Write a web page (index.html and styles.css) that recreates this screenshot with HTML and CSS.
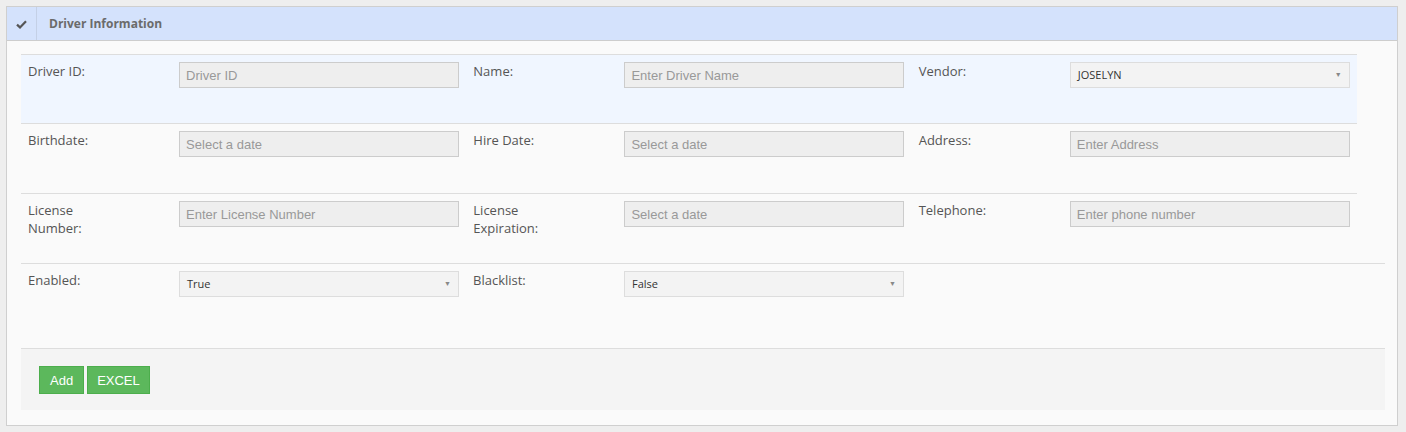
FILE: index.html
```html
<!DOCTYPE html>
<html>
<head>
<meta charset="utf-8">
<link rel="stylesheet" href="styles.css">
</head>
<body>
<div class="panel">
  <div class="panel-head">
    <div class="head-icon">
      <svg width="11" height="9" viewBox="0 0 11 9"><path d="M1 4.6 L4 7.4 L10 1.2" fill="none" stroke="#555" stroke-width="2.2"/></svg>
    </div>
    <div class="head-title">Driver Information</div>
  </div>
  <div class="panel-body">
    <table class="form-table">
      <colgroup><col class="c-l"><col class="c-i"><col class="c-l"><col class="c-i"><col class="c-l"><col class="c-i"></colgroup>
      <tr class="hl">
        <td class="lbl"><div class="lt">Driver ID:</div></td><td><input class="inp" placeholder="Driver ID"></td>
        <td class="lbl"><div class="lt">Name:</div></td><td><input class="inp" placeholder="Enter Driver Name"></td>
        <td class="lbl"><div class="lt">Vendor:</div></td><td><div class="sel">JOSELYN<span class="arr">▼</span></div></td>
      </tr>
      <tr>
        <td class="lbl"><div class="lt">Birthdate:</div></td><td><input class="inp" placeholder="Select a date"></td>
        <td class="lbl"><div class="lt">Hire Date:</div></td><td><input class="inp" placeholder="Select a date"></td>
        <td class="lbl"><div class="lt">Address:</div></td><td><input class="inp" placeholder="Enter Address"></td>
      </tr>
      <tr class="last">
        <td class="lbl"><div class="lt">License Number:</div></td><td><input class="inp" placeholder="Enter License Number"></td>
        <td class="lbl"><div class="lt">License Expiration:</div></td><td><input class="inp" placeholder="Select a date"></td>
        <td class="lbl"><div class="lt">Telephone:</div></td><td><input class="inp" placeholder="Enter phone number"></td>
      </tr>
    </table>
    <table class="form-table wide">
      <colgroup><col class="c-l"><col class="c-i"><col class="c-l"><col class="c-i"><col></colgroup>
      <tr class="tall">
        <td class="lbl"><div class="lt">Enabled:</div></td><td><div class="sel cap">True<span class="arr">▼</span></div></td>
        <td class="lbl"><div class="lt">Blacklist:</div></td><td><div class="sel cap">False<span class="arr">▼</span></div></td>
        <td></td>
      </tr>
    </table>
    <div class="footer">
      <button class="btn">Add</button><button class="btn">EXCEL</button>
    </div>
  </div>
</div>
</body>
</html>
```
FILE: styles.css
```css
html, body { margin: 0; padding: 0; }
body { background: #eeeeee; padding: 6px 8px 6px 6px; font-family: "Open Sans", sans-serif; }
.panel { border: 1px solid #cfcfcf; background: #fafafa; width: 1390px; }
.panel-head { display: flex; height: 33px; background: #d4e2fc; border-bottom: 1px solid #cdcdcd; }
.head-icon { width: 30px; border-right: 1px solid #c4d0e6; display: flex; align-items: center; justify-content: center; padding-top: 1px; box-sizing: border-box; }
.head-title { padding-left: 12px; line-height: 33px; font-size: 12px; font-weight: 700; color: #6b6b6b; }
.panel-body { padding: 13px 13px 15px 14px; }
.form-table { border-collapse: collapse; width: 1336px; table-layout: fixed; }
.form-table.wide { width: 1364px; }
.c-l { width: 151px; }
.c-i { width: 294px; }
.form-table td { border-top: 1px solid #dddddd; padding: 7px 7px 0 7px; height: 70px; vertical-align: top; box-sizing: border-box; }
.form-table tr.hl td, .form-table tr.last td { height: 69px; }
.form-table tr.tall td { height: 85px; }
.hl td { background: #f0f6ff; }
.lbl { font-size: 13px; line-height: 18px; color: #555; }
.lt { max-width: 82px; }
.inp { display: block; width: 280px; height: 26px; box-sizing: border-box; border: 1px solid #cccccc; background: #eeeeee; padding: 0 6px; font-family: "Liberation Sans", Arial, sans-serif; font-size: 13px; color: #555; margin: 0; }
.inp::placeholder { color: #999999; }
.sel { position: relative; width: 280px; height: 26px; box-sizing: border-box; border: 1px solid #dddddd; background: #f3f3f3; padding-left: 7px; font-size: 11px; line-height: 24px; color: #333; }
.arr { position: absolute; right: 7px; top: 0; font-size: 7px; color: #888; line-height: 24px; }
.footer { width: 1364px; height: 62px; box-sizing: border-box; background: #f4f4f4; border-top: 1px solid #dddddd; padding: 17px 0 0 18px; display: flex; gap: 3px; align-items: flex-start; }
.btn { height: 28px; background: #5cb85c; border: 1px solid #4cae4c; color: #fff; font-family: "Liberation Sans", Arial, sans-serif; font-size: 13px; padding: 0 10px; margin: 0; }
.btn + .btn { padding: 0 9px; }
```
